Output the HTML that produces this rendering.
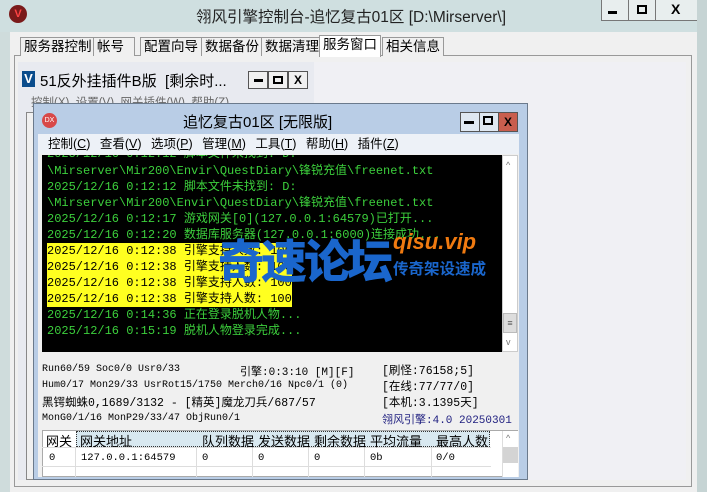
<!DOCTYPE html>
<html><head><meta charset="utf-8"><style>
*{margin:0;padding:0;box-sizing:border-box}
body{width:707px;height:492px;overflow:hidden;background:#cfdcdc;font-family:"Liberation Sans","Noto Sans CJK SC",sans-serif;position:relative}
.abs{position:absolute}
.tb{position:absolute;border:1px solid #555;background:#f0f0f0;width:20px;height:18px;font-size:12px;font-weight:bold;text-align:center;line-height:16px}
.tab{position:absolute;top:37px;height:19px;border:1px solid #999;border-bottom:none;background:#f0f0f0;font-size:13.5px;line-height:18px;padding:0 3px;color:#000}
.con{position:absolute;left:47px;font-family:"Liberation Mono","Noto Sans CJK SC",monospace;font-size:12px;color:#3ccf3c;white-space:pre;line-height:16px}
.y{background:#ffff20;color:#000}
.st{position:absolute;left:42px;font-family:"Liberation Mono","Noto Sans CJK SC",monospace;font-size:10px;color:#000;white-space:pre}
.gh{position:absolute;top:431px;font-size:13px;color:#000}
.gr{position:absolute;top:452px;font-size:10.5px;font-family:"Liberation Mono",monospace;color:#000}
</style></head><body>
<div class="abs" style="left:0;top:0;width:697px;height:32px;background:#cfdfe0"></div>
<div class="abs" style="left:9px;top:5px;width:18px;height:18px;border-radius:50%;background:#7a1a1a;color:#f44;font-size:11px;font-weight:bold;text-align:center;line-height:18px">V</div>
<div class="abs" style="left:196px;top:5px;font-size:15.5px;color:#222">翎风引擎控制台-追忆复古01区 [D:\Mirserver\]</div>
<div class="abs" style="left:601px;top:0;width:97px;height:21px;border:1px solid #777;border-top:none;background:#e8eeee"></div>
<div class="abs" style="left:628px;top:0;width:1px;height:21px;background:#777"></div>
<div class="abs" style="left:655px;top:0;width:1px;height:21px;background:#777"></div>
<div class="abs" style="left:608px;top:11px;width:9px;height:3px;background:#000"></div>
<div class="abs" style="left:637px;top:5px;width:10px;height:9px;border:2px solid #000"></div>
<div class="abs" style="left:671px;top:1px;font-size:14px;font-weight:bold">X</div>
<div class="abs" style="left:697px;top:0;width:10px;height:492px;background:#c6d4d4"></div>
<div class="abs" style="left:10px;top:32px;width:687px;height:460px;background:#f0f0f0"></div>
<div class="abs" style="left:14px;top:55px;width:678px;height:432px;border:1px solid #999;background:#f0f0f0"></div>
<div class="abs" style="left:18px;top:62px;width:668px;height:418px;background:#f0f0f4"></div>
<div class="tab" style="left:20px">服务器控制</div>
<div class="tab" style="left:93px;width:42px">帐号</div>
<div class="tab" style="left:140px">配置向导</div>
<div class="tab" style="left:201px">数据备份</div>
<div class="tab" style="left:261px">数据清理</div>
<div class="tab" style="left:319px;top:35px;height:22px;background:#fff">服务窗口</div>
<div class="tab" style="left:382px">相关信息</div>
<div class="abs" style="left:18px;top:62px;width:296px;height:418px;background:#e8eaf0"></div>
<div class="abs" style="left:22px;top:71px;width:13px;height:16px;background:#0a4c8c;color:#fff;font-size:13px;font-weight:bold;text-align:center;line-height:16px">V</div>
<div class="abs" style="left:40px;top:70px;font-size:15px;color:#000">51反外挂插件B版 &nbsp;[剩余时...</div>
<div class="tb" style="left:248px;top:71px"><div style="margin:7px auto 0;width:9px;height:3px;background:#000"></div></div>
<div class="tb" style="left:268px;top:71px"><div style="margin:4px auto 0;width:10px;height:8px;border:2px solid #000"></div></div>
<div class="tb" style="left:288px;top:71px">X</div>
<div class="abs" style="left:31px;top:94px;font-size:11.5px;color:#666">控制(X) &nbsp;设置(V) &nbsp;网关插件(W) &nbsp;帮助(Z)</div>
<div class="abs" style="left:26px;top:112px;width:10px;height:368px;border:1px solid #888;background:#f0f0f0"></div>
<div class="abs" style="left:33px;top:103px;width:495px;height:377px;background:#b9cde6;border:1px solid #6b7a8c"></div>
<div class="abs" style="left:42px;top:113px;width:15px;height:15px;border-radius:50%;background:#d84848;color:#fff;font-size:7px;text-align:center;line-height:15px">DX</div>
<div class="abs" style="left:183px;top:111px;font-size:15px;color:#000">追忆复古01区 [无限版]</div>
<div class="abs" style="left:460px;top:112px;width:58px;height:20px;background:#dfe8f2;border:1px solid #555"></div>
<div class="abs" style="left:479px;top:112px;width:1px;height:20px;background:#555"></div>
<div class="abs" style="left:498px;top:112px;width:20px;height:20px;background:#c95e4e;border:1px solid #555;font-size:12px;font-weight:bold;text-align:center;line-height:18px">X</div>
<div class="abs" style="left:464px;top:121px;width:10px;height:3px;background:#000"></div>
<div class="abs" style="left:483px;top:116px;width:10px;height:9px;border:2px solid #000"></div>
<div class="abs" style="left:38px;top:134px;width:481px;height:343px;background:#f0f0f0"></div>
<div class="abs" style="left:38px;top:134px;width:481px;height:20px;background:#edf1f7;font-size:12.5px;line-height:20px;color:#000;padding-left:10px;word-spacing:6px">控制(<u>C</u>) 查看(<u>V</u>) 选项(<u>P</u>) 管理(<u>M</u>) 工具(<u>T</u>) 帮助(<u>H</u>) 插件(<u>Z</u>)</div>
<div class="abs" style="left:42px;top:155px;width:460px;height:197px;background:#000"></div>
<div class="abs" style="left:502px;top:155px;width:16px;height:197px;background:#fff;border:1px solid #ccc"></div>
<div class="abs" style="left:506px;top:160px;font-size:9px;color:#777">^</div>
<div class="abs" style="left:503px;top:313px;width:14px;height:20px;background:#ddd;border:1px solid #bbb;font-size:9px;text-align:center;line-height:18px;color:#555">≡</div>
<div class="abs" style="left:506px;top:337px;font-size:9px;color:#777">v</div>
<div class="abs" style="left:42px;top:155px;width:460px;height:197px;overflow:hidden">
<div class="con" style="left:5px;top:-9px">2025/12/16 0:12:12 脚本文件未找到: D:</div>
<div class="con" style="left:5px;top:8px">\Mirserver\Mir200\Envir\QuestDiary\锋锐充值\freenet.txt</div>
<div class="con" style="left:5px;top:24px">2025/12/16 0:12:12 脚本文件未找到: D:</div>
<div class="con" style="left:5px;top:40px">\Mirserver\Mir200\Envir\QuestDiary\锋锐充值\freenet.txt</div>
<div class="con" style="left:5px;top:56px">2025/12/16 0:12:17 游戏网关[0](127.0.0.1:64579)已打开...</div>
<div class="con" style="left:5px;top:72px">2025/12/16 0:12:20 数据库服务器(127.0.0.1:6000)连接成功...</div>
<div class="con y" style="left:5px;top:88px">2025/12/16 0:12:38 引擎支持人数: 100</div>
<div class="con y" style="left:5px;top:104px">2025/12/16 0:12:38 引擎支持人数: 100</div>
<div class="con y" style="left:5px;top:120px">2025/12/16 0:12:38 引擎支持人数: 100</div>
<div class="con y" style="left:5px;top:136px">2025/12/16 0:12:38 引擎支持人数: 100</div>
<div class="con" style="left:5px;top:152px">2025/12/16 0:14:36 正在登录脱机人物...</div>
<div class="con" style="left:5px;top:168px">2025/12/16 0:15:19 脱机人物登录完成...</div>
</div>
<div class="abs" style="left:218px;top:226px;font-size:46px;font-weight:900;color:#1a66cc;letter-spacing:-3px;font-family:'Noto Sans CJK SC',sans-serif">奇速论坛</div>
<div class="abs" style="left:393px;top:229px;font-size:22px;font-weight:bold;font-style:italic;color:#f07a10">qisu.vip</div>
<div class="abs" style="left:393px;top:257px;font-size:15.5px;font-weight:bold;color:#1a66cc;font-family:'Noto Sans CJK SC',sans-serif">传奇架设速成</div>
<div class="st" style="top:364px">Run60/59 Soc0/0 Usr0/33</div>
<div class="st" style="left:240px;top:363px;font-size:11px">引擎:0:3:10 [M][F]</div>
<div class="st" style="left:382px;top:362px;font-size:11.5px">[刷怪:76158;5]</div>
<div class="st" style="top:380px">Hum0/17 Mon29/33 UsrRot15/1750 Merch0/16 Npc0/1 (0)</div>
<div class="st" style="left:382px;top:378px;font-size:11.5px">[在线:77/77/0]</div>
<div class="st" style="top:394px;font-size:11.5px">黑锷蜘蛛0,1689/3132 - [精英]魔龙刀兵/687/57</div>
<div class="st" style="left:382px;top:394px;font-size:11.5px">[本机:3.1395天]</div>
<div class="st" style="top:413px">MonG0/1/16 MonP29/33/47 ObjRun0/1</div>
<div class="st" style="left:382px;top:411px;color:#202080;font-size:11px">翎风引擎:4.0 20250301</div>
<div class="abs" style="left:42px;top:430px;width:476px;height:47px;background:#fff;border:1px solid #aaa"></div>
<div class="abs" style="left:76px;top:431px;width:414px;height:16px;background:#d8e8f0;border:1px dotted #333"></div>
<div class="abs" style="left:42px;top:447px;width:449px;height:1px;background:#ddd"></div>
<div class="abs" style="left:42px;top:466px;width:449px;height:1px;background:#ddd"></div>
<div class="abs" style="left:75px;top:447px;width:1px;height:30px;background:#ddd"></div>
<div class="abs" style="left:196px;top:447px;width:1px;height:30px;background:#ddd"></div>
<div class="abs" style="left:252px;top:447px;width:1px;height:30px;background:#ddd"></div>
<div class="abs" style="left:308px;top:447px;width:1px;height:30px;background:#ddd"></div>
<div class="abs" style="left:364px;top:447px;width:1px;height:30px;background:#ddd"></div>
<div class="abs" style="left:431px;top:447px;width:1px;height:30px;background:#ddd"></div>
<div class="abs" style="left:502px;top:431px;width:16px;height:46px;background:#fff;border-left:1px solid #ddd"></div>
<div class="abs" style="left:503px;top:447px;width:15px;height:16px;background:#d4d4d4"></div>
<div class="abs" style="left:506px;top:433px;font-size:9px;color:#777">^</div>
<div class="gh" style="left:46px">网关</div>
<div class="gh" style="left:80px">网关地址</div>
<div class="gh" style="left:202px">队列数据</div>
<div class="gh" style="left:258px">发送数据</div>
<div class="gh" style="left:314px">剩余数据</div>
<div class="gh" style="left:370px">平均流量</div>
<div class="gh" style="left:436px">最高人数</div>
<div class="gr" style="left:49px">0</div>
<div class="gr" style="left:81px">127.0.0.1:64579</div>
<div class="gr" style="left:202px">0</div>
<div class="gr" style="left:258px">0</div>
<div class="gr" style="left:314px">0</div>
<div class="gr" style="left:370px">0b</div>
<div class="gr" style="left:436px">0/0</div>
</body></html>
